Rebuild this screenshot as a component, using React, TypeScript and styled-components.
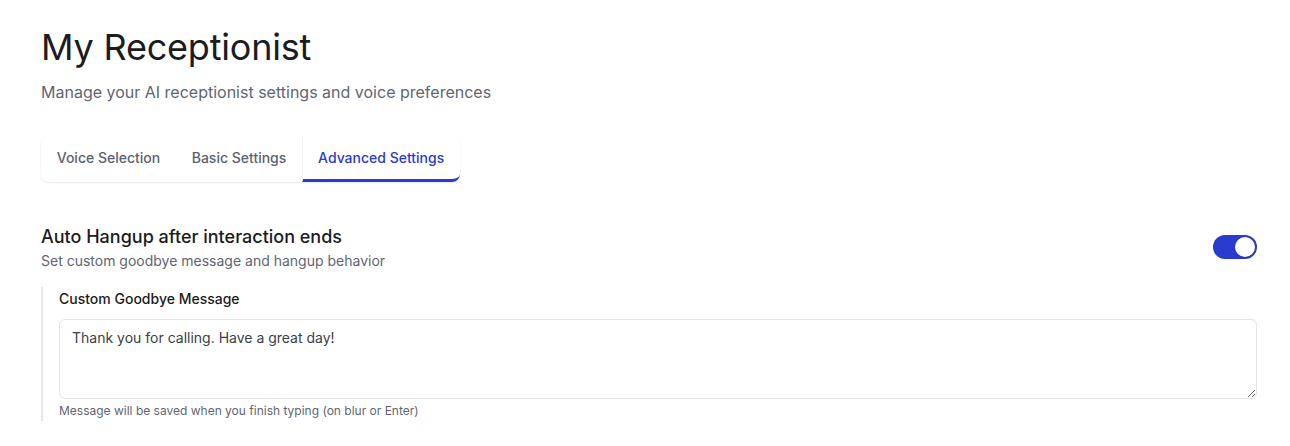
import { useState } from 'react';
import styled, { createGlobalStyle } from 'styled-components';

const GlobalStyle = createGlobalStyle`
  body {
    margin: 0;
    background: #ffffff;
    font-family: Inter, "Noto Sans", sans-serif;
    color: #1a1c22;
  }
`;

const tabs = ['Voice Selection', 'Basic Settings', 'Advanced Settings'];

const App = () => {
  const [active, setActive] = useState(2);
  const [enabled, setEnabled] = useState(true);
  const [message, setMessage] = useState('Thank you for calling. Have a great day!');

  return (
    <>
      <GlobalStyle />
      <Page>
        <Title>My Receptionist</Title>
        <Subtitle>Manage your AI receptionist settings and voice preferences</Subtitle>
        <TabList>
          {tabs.map((t, i) => (
            <Tab key={t} $active={i === active} onClick={() => setActive(i)}>
              {t}
            </Tab>
          ))}
        </TabList>

        <Section>
          <SectionHeader>
            <div>
              <SectionTitle>Auto Hangup after interaction ends</SectionTitle>
              <SectionDesc>Set custom goodbye message and hangup behavior</SectionDesc>
            </div>
            <Switch $on={enabled} onClick={() => setEnabled(!enabled)} aria-pressed={enabled}>
              <Knob $on={enabled} />
            </Switch>
          </SectionHeader>

          <Indent>
            <Label>Custom Goodbye Message</Label>
            <TextArea value={message} onChange={(e) => setMessage(e.target.value)} />
            <Hint>Message will be saved when you finish typing (on blur or Enter)</Hint>
          </Indent>
        </Section>
      </Page>
    </>
  );
};

export default App;

const Page = styled.div`
  padding: 27px 33px 0 41px;
`;
const Title = styled.h1`
  margin: 0;
  font-size: 36px;
  line-height: 40px;
  font-weight: 400;
  letter-spacing: -0.2px;
  color: #1b1c20;
`;
const Subtitle = styled.p`
  margin: 13px 0 0;
  font-size: 16px;
  line-height: 24px;
  color: #5f6573;
`;
const TabList = styled.div`
  display: inline-flex;
  margin-top: 32px;
  background: #ffffff;
  border-radius: 8px;
  box-shadow: 0 1px 2px rgba(16, 24, 40, 0.1);
`;
const Tab = styled.button<{ $active: boolean }>`
  border: none;
  background: transparent;
  font-family: inherit;
  font-size: 14px;
  font-weight: 500;
  line-height: 20px;
  padding: ${(p) => (p.$active ? '12px 16px 11px 15px' : '12px 15.75px 11px')};
  cursor: pointer;
  color: ${(p) => (p.$active ? '#2b3bd0' : '#5b6170')};
  border-bottom: 3px solid ${(p) => (p.$active ? '#2b3bd0' : 'transparent')};
  border-left: ${(p) => (p.$active ? '1px solid #f1f2f4' : 'none')};
  border-radius: ${(p) => (p.$active ? '0 0 8px 0' : '0')};
`;
const Section = styled.div`
  margin-top: 41px;
`;
const SectionHeader = styled.div`
  display: flex;
  align-items: center;
  justify-content: space-between;
`;
const SectionTitle = styled.h3`
  margin: 0;
  font-size: 18px;
  line-height: 28px;
  font-weight: 500;
  color: #1b1c20;
`;
const SectionDesc = styled.p`
  margin: 0;
  font-size: 14px;
  line-height: 20px;
  color: #5f6573;
`;
const Switch = styled.button<{ $on: boolean }>`
  width: 44px;
  height: 24px;
  padding: 2px;
  border: none;
  border-radius: 12px;
  background: ${(p) => (p.$on ? '#2a3bcf' : '#d1d5db')};
  cursor: pointer;
  display: flex;
  align-items: center;
`;
const Knob = styled.span<{ $on: boolean }>`
  display: block;
  width: 20px;
  height: 20px;
  border-radius: 50%;
  background: #ffffff;
  box-shadow: 0 1px 2px rgba(0, 0, 0, 0.15);
  transform: translateX(${(p) => (p.$on ? '20px' : '0')});
`;
const Indent = styled.div`
  margin-top: 16px;
  padding: 2px 0 2px 16px;
  border-left: 2px solid #e6e7ea;
`;
const Label = styled.label`
  display: block;
  font-size: 14px;
  line-height: 20px;
  font-weight: 500;
  color: #1b1c20;
`;
const TextArea = styled.textarea`
  display: block;
  box-sizing: border-box;
  width: 100%;
  height: 80px;
  margin-top: 10px;
  padding: 8px 12px;
  border: 1px solid #e3e5e8;
  border-radius: 6px;
  font-family: inherit;
  font-size: 14px;
  line-height: 20px;
  color: #3a3f4a;
  outline: none;
`;
const Hint = styled.p`
  margin: 4px 0 0;
  font-size: 12px;
  line-height: 16px;
  color: #5f6573;
`;
